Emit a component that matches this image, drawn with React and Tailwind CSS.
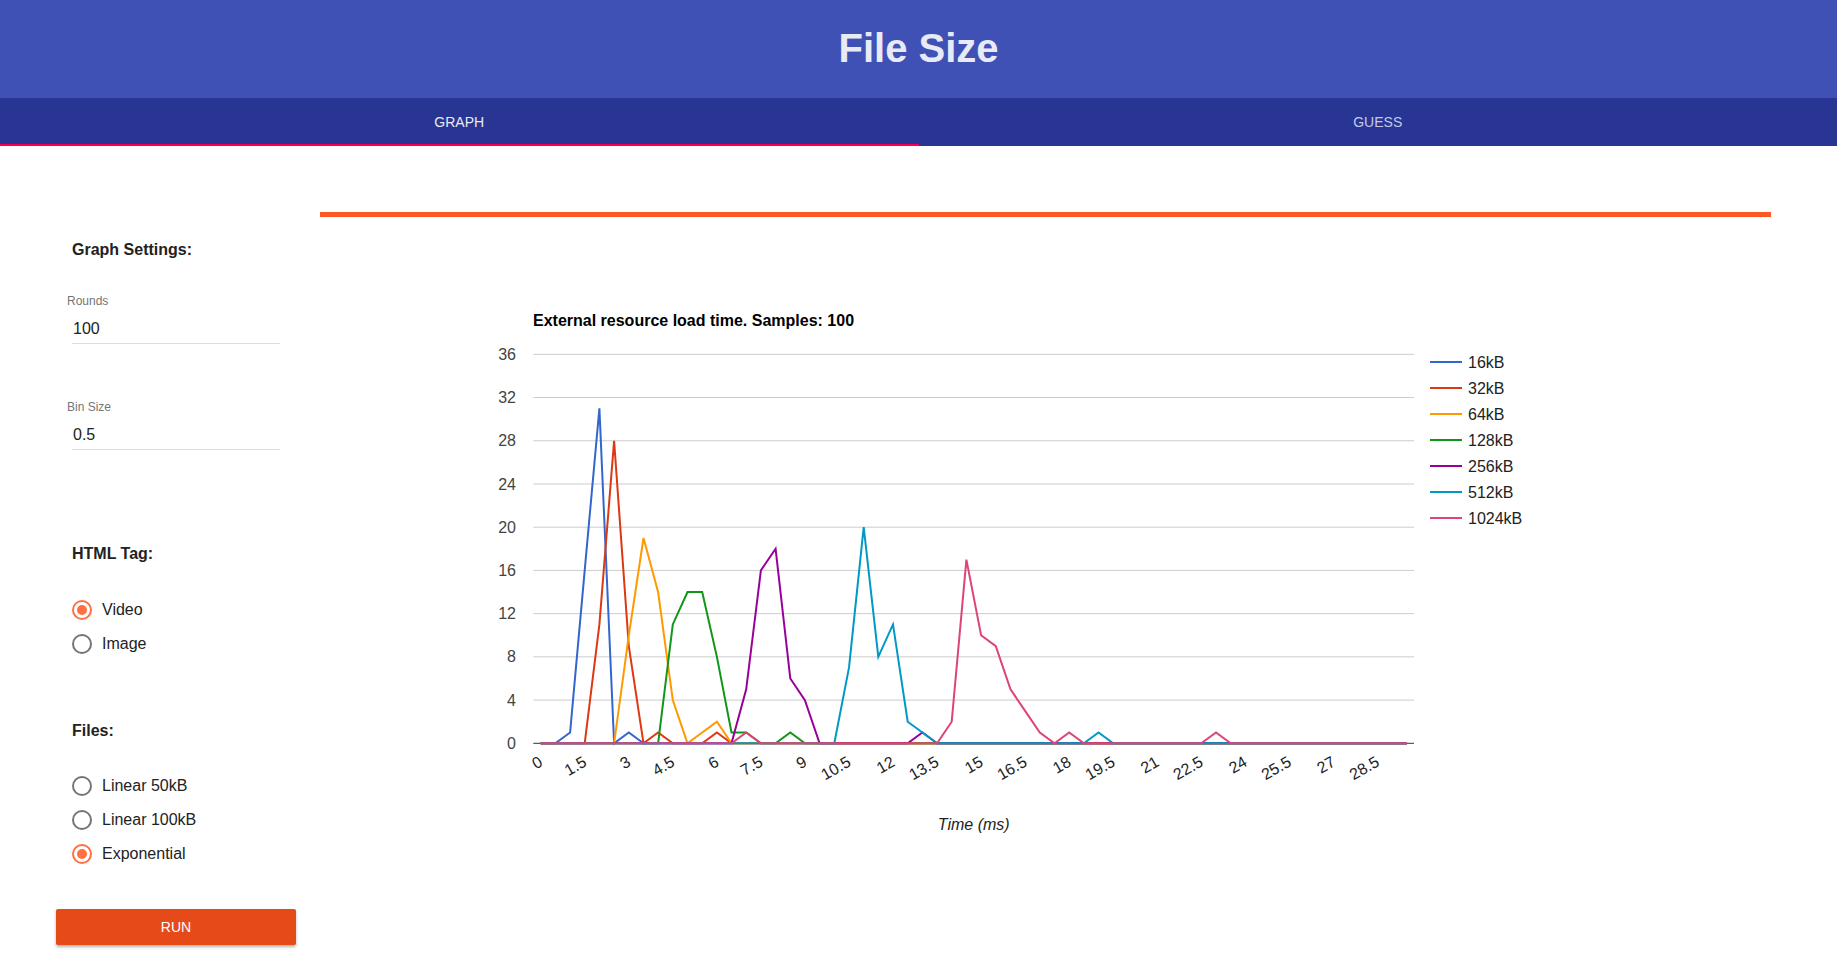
import React from "react";

// chart geometry (page coordinates, svg uses a shifted viewBox)
const PLOT_LEFT = 533.3;
const PLOT_RIGHT = 1414;
const X0 = 540.7;
const DX = 14.68;
const Y0 = 743.3;
const PER_UNIT = 10.805;

const yOf = (v) => Y0 - v * PER_UNIT;
const xOf = (i) => X0 + i * DX;

const pad = (arr) => {
  const out = new Array(60).fill(0);
  arr.forEach(([i, v]) => (out[i] = v));
  return out;
};

const series = [
  { name: "16kB", color: "#3366cc", data: pad([[2, 1], [3, 16], [4, 31], [6, 1]]) },
  { name: "32kB", color: "#dc3912", data: pad([[4, 11], [5, 28], [6, 9], [8, 1], [12, 1]]) },
  { name: "64kB", color: "#ff9900", data: pad([[6, 10], [7, 19], [8, 14], [9, 4], [11, 1], [12, 2]]) },
  { name: "128kB", color: "#109618", data: pad([[9, 11], [10, 14], [11, 14], [12, 8], [13, 1], [14, 1], [17, 1]]) },
  { name: "256kB", color: "#990099", data: pad([[14, 5], [15, 16], [16, 18], [17, 6], [18, 4], [26, 1]]) },
  { name: "512kB", color: "#0099c6", data: pad([[21, 7], [22, 20], [23, 8], [24, 11], [25, 2], [26, 1], [38, 1]]) },
  {
    name: "1024kB",
    color: "#dd4477",
    data: pad([[14, 1], [28, 2], [29, 17], [30, 10], [31, 9], [32, 5], [33, 3], [34, 1], [36, 1], [46, 1]]),
  },
];

const yTicks = [0, 4, 8, 12, 16, 20, 24, 28, 32, 36];
const xTicks = [];
for (let i = 0; i < 60; i += 3) xTicks.push(i);

function Chart() {
  return (
    <svg width="1451" height="640" viewBox="320 217 1451 640" className="block" style={{ fontFamily: "'Liberation Sans', Arial, sans-serif" }}>
      <text x="533" y="325.5" fontSize="16" fontWeight="bold" fill="#000">
        External resource load time. Samples: 100
      </text>

      {/* gridlines + y labels */}
      {yTicks.map((t) => (
        <g key={t}>
          <line x1={PLOT_LEFT} x2={PLOT_RIGHT} y1={yOf(t)} y2={yOf(t)} stroke={t === 0 ? "#333333" : "#cccccc"} strokeWidth="1" />
          <text x="516" y={yOf(t) + 5.6} fontSize="16" fill="#444444" textAnchor="end">
            {t}
          </text>
        </g>
      ))}

      {/* series */}
      {series.map((s) => (
        <polyline
          key={s.name}
          points={s.data.map((v, i) => `${xOf(i).toFixed(1)},${yOf(v).toFixed(1)}`).join(" ")}
          fill="none"
          stroke={s.color}
          strokeWidth="2"
        />
      ))}

      {/* x labels */}
      {xTicks.map((i) => {
        const x = xOf(i) + 3;
        const y = 765;
        return (
          <text key={i} x={x} y={y} fontSize="16" fill="#222222" textAnchor="end" transform={`rotate(-30 ${x} ${y})`}>
            {String(i * 0.5)}
          </text>
        );
      })}

      <text x="973.7" y="830.3" fontSize="16" fontStyle="italic" fill="#222222" textAnchor="middle">
        Time (ms)
      </text>

      {/* legend */}
      {series.map((s, k) => (
        <g key={s.name}>
          <line x1="1430" x2="1462" y1={362 + k * 26} y2={362 + k * 26} stroke={s.color} strokeWidth="2" />
          <text x="1468" y={362 + k * 26 + 5.6} fontSize="16" fill="#222222">
            {s.name}
          </text>
        </g>
      ))}
    </svg>
  );
}

function Radio({ checked, label, className = "" }) {
  return (
    <div className={`flex items-center h-[20px] pl-4 ${className}`}>
      <span
        className={`w-[20px] h-[20px] rounded-full border-2 flex items-center justify-center ${
          checked ? "border-[#ff7043]" : "border-[#757575]"
        }`}
      >
        {checked && <span className="w-[10px] h-[10px] rounded-full bg-[#ff7043]"></span>}
      </span>
      <span className="ml-[10px] text-[16px] leading-[20px] text-[#222]">{label}</span>
    </div>
  );
}

function Field({ label, value, className = "" }) {
  return (
    <div className={className}>
      <div className="pl-[11px] text-[12px] leading-[16px] text-[#757575]">{label}</div>
      <div className="mt-[10px] ml-4 w-[208px] pl-px pb-[4px] border-b border-[#dedede] text-[16px] leading-[20px] text-[#222]">
        {value}
      </div>
    </div>
  );
}

export default function App() {
  return (
    <div className="min-h-screen bg-white font-['Liberation_Sans',Arial,sans-serif]">
      {/* ヘッダー */}
      <div className="h-[98px] bg-[#3f51b5] flex items-center justify-center">
        <h1 className="text-[40px] leading-[40px] font-bold text-[#e8eaf6] -mt-[2px]">File Size</h1>
      </div>

      {/* タブ */}
      <div className="h-[48px] bg-[#283593] flex">
        <div className="flex-1 flex items-center justify-center text-[14px] text-[#e8eaf6] shadow-[inset_0_-2px_0_#f50057]">
          GRAPH
        </div>
        <div className="flex-1 flex items-center justify-center text-[14px] text-[#c5cae9]">GUESS</div>
      </div>

      <div className="flex pl-[56px] gap-[24px]">
        {/* 設定 */}
        <div className="w-[240px] flex flex-col">
          <div className="mt-[94px] pl-4 text-[16px] leading-[20px] font-bold text-[#222]">Graph Settings:</div>
          <Field label="Rounds" value="100" className="mt-[33px]" />
          <Field label="Bin Size" value="0.5" className="mt-[55px]" />

          <div className="mt-[94px] pl-4 text-[16px] leading-[20px] font-bold text-[#222]">HTML Tag:</div>
          <Radio checked label="Video" className="mt-[36px]" />
          <Radio label="Image" className="mt-[14px]" />

          <div className="mt-[67px] pl-4 text-[16px] leading-[20px] font-bold text-[#222]">Files:</div>
          <Radio label="Linear 50kB" className="mt-[35px]" />
          <Radio label="Linear 100kB" className="mt-[14px]" />
          <Radio checked label="Exponential" className="mt-[14px]" />

          <button className="mt-[45px] h-[36px] w-[240px] rounded-[2px] bg-[#e64a19] text-white text-[14px] shadow-[0_2px_3px_rgba(0,0,0,0.3)]">
            RUN
          </button>
        </div>

        {/* グラフ */}
        <div className="w-[1451px]">
          <div className="mt-[66px] h-[5px] bg-[#ff5722]"></div>
          <Chart />
        </div>
      </div>
    </div>
  );
}
